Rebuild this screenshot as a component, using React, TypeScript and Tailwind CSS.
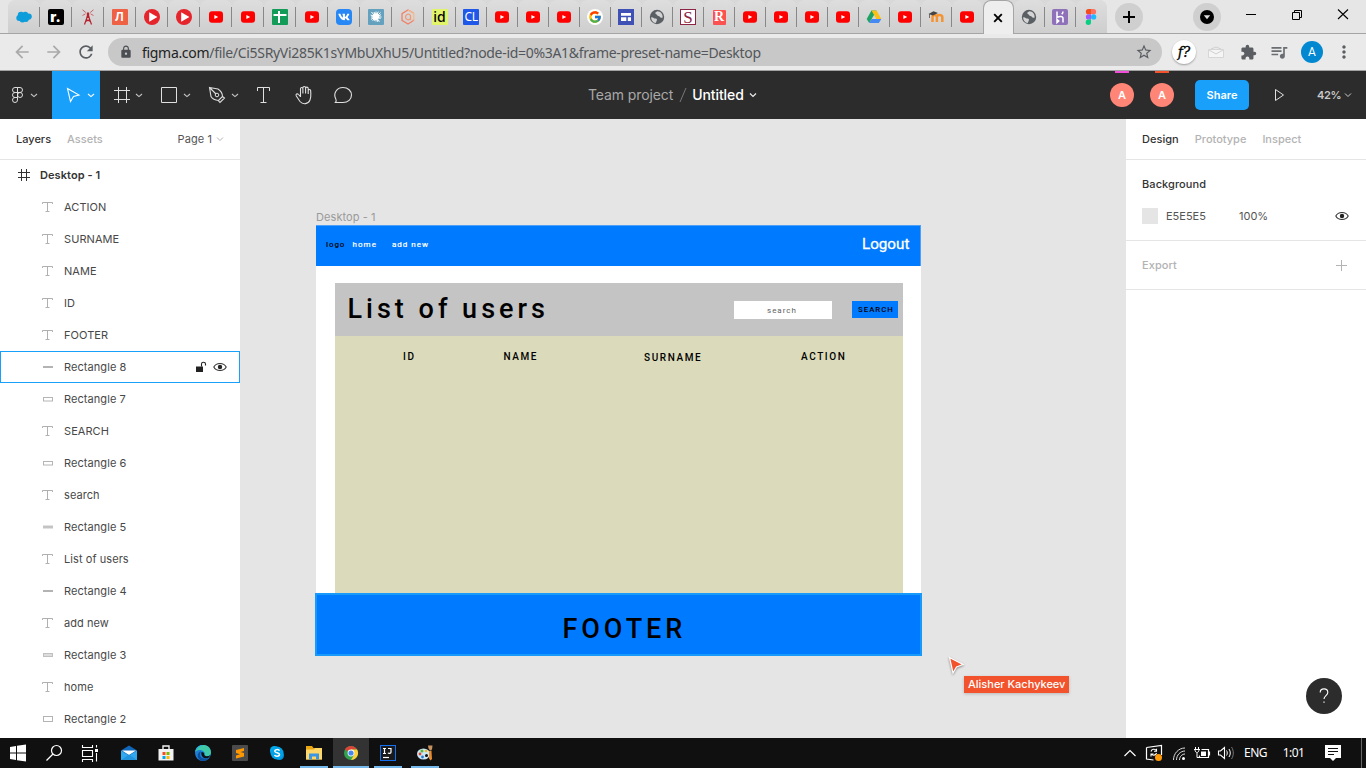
import React from "react";
import { MdArrowBack, MdArrowForward, MdRefresh, MdLock, MdStarBorder, MdExtension, MdQueueMusic, MdMoreVert } from "react-icons/md";
import { FcGoogle } from "react-icons/fc";
import { FaVk } from "react-icons/fa";

type SvgProps = { box: string; w: number; h: number; cls?: string; children: React.ReactNode };
const Svg = ({ box, w, h, cls = "", children }: SvgProps) => (
  <svg viewBox={box} width={w} height={h} fill="none" className={"block shrink-0 " + cls}>{children}</svg>
);
const Fav = ({ children }: { children: React.ReactNode }) => <Svg box="0 0 16 16" w={16} h={16}>{children}</Svg>;

const YouTube = () => (
  <Fav><rect x="1" y="2.3" width="14" height="11.4" rx="3" fill="#f00" /><path d="M6.400 5.900v4.200L10.200 8z" fill="#fff" /></Fav>
);
const PlayDot = () => (
  <Fav><circle cx="8" cy="8" r="8" fill="#e5242b" /><path d="M5.200 3.200v9.600L13.400 8z" fill="#fff" /></Fav>
);
const Globe = () => (
  <Fav>
    <circle cx="8" cy="8" r="7.200" fill="#5a5f64" />
    <path d="M2.200 8.200c2.200-.4 2.700 1.400 4.300 1.300 1.400 0 1.700.9 1.300 2l-1 2.600C4 13.600 2 11 2.200 8.200zM8.500 2.300c-1 .8-2.200.8-2.200 2 0 1 1.700.8 1.700 1.800 0 1.100 2.300.7 2.800 1.700.5 1.100 1.600 1.300 2.900.7C13.800 5 11.500 2.400 8.500 2.300z" fill="#d4d4d4" />
  </Fav>
);

const favicons: Record<string, React.ReactNode> = {
  yt: <YouTube />,
  play: <PlayDot />,
  globe: <Globe />,
  sf: (
    <Fav>
      <g fill="#0d9dda">
        <circle cx="5" cy="6" r="3.200" /><circle cx="9.300" cy="5.600" r="2.900" /><circle cx="12.700" cy="7.600" r="3.100" />
        <circle cx="3.200" cy="9" r="2.900" /><circle cx="6.500" cy="10.400" r="3" /><circle cx="10" cy="10.200" r="2.700" />
      </g>
    </Fav>
  ),
  r: <div className="flex size-4 items-center justify-center rounded-[2px] bg-black pb-[1px] font-['Inter'] text-[14px] leading-none font-black text-white">r.</div>,
  tower: (
    <Fav>
      <path d="M4.500 15.500 7.500 7M11.500 15.500 8.500 7M5.500 12.500l4.500-2M10.500 12.500l-4.500-2" stroke="#b5232f" strokeWidth="1.200" />
      <path d="M6.800 3.500h2.400V9H6.800z" fill="#b5232f" />
      <path d="M2.500.8 5.800 3.500M13.500.8 10.200 3.500M2.500 6.500 5.500 4.800M13.500 6.500 10.500 4.800" stroke="#c4525c" strokeWidth=".9" />
    </Fav>
  ),
  l: <div className="flex size-4 items-center justify-center rounded-[1px] bg-[#ef6144] font-['Liberation_Sans'] text-[12px] leading-none font-bold text-white">Л</div>,
  sheets: <Fav><rect width="16" height="16" rx="1" fill="#129c58" /><path d="M1.500 6h13M7 2v12" stroke="#fff" strokeWidth="2" /></Fav>,
  vk: <div className="flex size-4 items-center justify-center rounded-[4px] bg-[#2787f5]"><FaVk className="size-3 text-white" /></div>,
  star: (
    <Fav>
      <rect width="16" height="16" rx="1" fill="#64a1be" />
      <path d="M8 2.500v10M3 8h10.500M3.500 3l8 9.500M12.500 3.500l-8 8M6 3l4 10M10.300 2.600 6 12M2.600 6l10 3.500M3 10.300l10-4.600" stroke="#fff" strokeWidth="1" />
      <circle cx="7.800" cy="7.600" r="3.300" fill="#fff" />
    </Fav>
  ),
  hex: (
    <Fav>
      <path d="M13.500 10.500v1L8 15l-6-3.600V4.600L8 1l5.500 3" stroke="#f08068" strokeWidth="1.300" />
      <path d="M8 1l5.800 3.500v7" stroke="#f3bb90" strokeWidth="1.300" />
      <path d="M10.500 9.500c-1.300 2-5 1.500-5-1.500s3.500-3.800 5-1.500V11" stroke="#f19a7a" strokeWidth="1.300" />
    </Fav>
  ),
  id: <div className="flex size-4 items-center justify-center bg-[#e2f56a] font-['Noto_Sans'] text-[14px] leading-none font-medium text-black">id</div>,
  cl: <div className="flex size-4 items-center justify-center rounded-[1px] bg-[#1f57e8] font-['Noto_Sans'] text-[12px] leading-none tracking-[-0.5px] text-white">CL</div>,
  g: <div className="flex size-4 items-center justify-center rounded-full bg-white"><FcGoogle className="size-[14px]" /></div>,
  sites: <Fav><rect width="16" height="16" fill="#3f51b5" /><path d="M3 4h10v2.700H3zM3 8.300h5.300V12H3zM9.800 8.300H13V12H9.800z" fill="#fff" /></Fav>,
  s: <div className="flex size-4 items-center justify-center border border-[#8c2443] bg-white font-['Liberation_Serif'] text-[17px] leading-none text-[#8c2443]">S</div>,
  rr: (
    <div className="flex h-[15px] w-[13px] items-center justify-center rounded-[1px] bg-[#fb5151] font-['Liberation_Serif'] text-[14px] leading-none font-bold text-white">R</div>
  ),
  drive: (
    <Fav>
      <path d="M5.500 1.500h5L8 6 3.200 14 .7 10z" fill="#1ea362" />
      <path d="M5.500 1.500h5l4.800 8.500h-5z" fill="#fbc116" />
      <path d="M3.200 14h9.600l2.500-4H5.600z" fill="#4688f4" />
    </Fav>
  ),
  moodle: (
    <Fav>
      <path d="M3 13.500V8.500c0-2.600 4.400-2.600 4.400 0v5m0-5c0-2.600 5.400-2.600 5.400 0v5" stroke="#f59331" strokeWidth="2.500" transform="translate(1.500 -.5)" />
      <path d="m.5 5 5-2.800L10 4 5 6.500z" fill="#444" /><path d="M1.500 5v4" stroke="#444" strokeWidth=".7" />
    </Fav>
  ),
  heroku: (
    <div className="size-4 rounded-[2px] bg-[#8f71ba]">
      <Fav><path d="M5 2.500v6c2-1 6-1.700 6 .8v4.200M5 10.500v3l1.700-1.500zM11 2.500c0 1.200-.5 2-1.200 2.800" stroke="#fff" strokeWidth="1.500" /></Fav>
    </div>
  ),
  figma: (
    <Fav>
      <path d="M5.500 0H8v5.300H5.500a2.650 2.650 0 0 1 0-5.300z" fill="#f24e1e" />
      <path d="M8 0h2.500a2.650 2.650 0 0 1 0 5.300H8z" fill="#ff7262" />
      <path d="M5.500 5.300H8v5.300H5.500a2.650 2.650 0 0 1 0-5.300z" fill="#a259ff" />
      <circle cx="10.600" cy="7.950" r="2.650" fill="#1abcfe" />
      <path d="M5.500 10.600H8v2.600a2.650 2.650 0 1 1-2.500-2.600z" fill="#0acf83" />
    </Fav>
  ),
};

const wideTabs = ["sf", "r", "tower", "l", "play", "play", "yt", "yt", "sheets", "yt", "vk", "star", "hex", "id"];
const slimTabs = ["cl", "yt", "yt", "yt", "g", "sites", "globe", "s", "rr", "yt", "yt", "yt", "yt", "drive", "yt", "moodle", "yt"];
const lastTabs = ["globe", "heroku", "figma"];

const Tab = ({ id, width, sep = true }: { id: string; width: string; sep?: boolean }) => (
  <div className={"flex h-[33px] shrink-0 items-center rounded-t-[8px] bg-linear-to-b from-[#dedede] to-[#cecece] pt-px " + width}>
    <div className="flex flex-1 items-center justify-center">{favicons[id]}</div>
    <div className={"h-5 w-px " + (sep ? "bg-[#888]" : "bg-transparent")} />
  </div>
);

const TabStrip = () => (
  <div className="flex h-[34px] shrink-0 border-b border-[#a5a5a5] bg-[#e6e6e6] pl-2">
    <div className="flex rounded-t-[8px] bg-[#d8d8d8]">
      {wideTabs.map((t, i) => <Tab key={i} id={t} width="w-8" />)}
      {slimTabs.map((t, i) => <Tab key={i} id={t} width="w-[31px]" sep={i < slimTabs.length - 1} />)}
      <div className="z-10 flex h-[34px] w-[31px] items-center justify-center rounded-t-[8px] border border-b-0 border-[#a5a5a5] bg-[#eee] pr-px">
        <Svg box="0 0 10 10" w={10} h={10}><path d="m1.200 1.200 7.600 7.600m0-7.600L1.200 8.800" stroke="#000" strokeWidth="1.900" /></Svg>
      </div>
      {lastTabs.map((t, i) => <Tab key={i} id={t} width="w-[31px]" sep={i < 2} />)}
    </div>
    <div className="mt-[3px] ml-2 flex size-7 items-center justify-center rounded-full bg-[#cfcfcf]">
      <Svg box="0 0 12 12" w={12} h={12}><path d="M6 0v12M0 6h12" stroke="#000" strokeWidth="2" /></Svg>
    </div>
    <div className="mt-[3px] ml-[50px] flex size-7 items-center justify-center rounded-full bg-[#cfcfcf]">
      <Svg box="0 0 14 14" w={14} h={14}><circle cx="7" cy="7" r="7" fill="#000" /><path d="M3.800 5.300h6.400L7 9.200z" fill="#ddd" /></Svg>
    </div>
    <Svg box="1221 0 145 30" w={145} h={30}>
      <path d="M1246 14.500h10" stroke="#000" />
      <path d="M1292.500 12.500h7v7h-7zM1294.500 12.500v-2h7v7h-2" stroke="#000" />
      <path d="m1338 9.500 10 9.500m0-9.500-10 9.500" stroke="#000" strokeWidth="1.100" />
    </Svg>
  </div>
);

const Toolbar = () => (
  <div className="flex h-[37px] shrink-0 items-center border-b border-[#a2a2a2] bg-[#eaeaea] pl-3">
    <MdArrowBack className="size-5 text-[#a9a9a9]" />
    <MdArrowForward className="ml-3 size-5 text-[#a9a9a9]" />
    <MdRefresh className="ml-3 size-5 text-[#5a5e62]" />
    <div className="ml-3 flex h-7 w-[1054px] items-center rounded-full bg-[#c8c8c8] pr-[9px] pl-[11px]">
      <MdLock className="size-[14px] text-[#4b4e52]" />
      <div className="ml-[9px] flex-1 font-['Noto_Sans'] text-[14px] tracking-[-0.31px] whitespace-nowrap text-[#53565a]">
        <span className="text-[#222]">figma.com</span>/file/Ci5SRyVi285K1sYMbUXhU5/Untitled?node-id=0%3A1&amp;frame-preset-name=Desktop
      </div>
      <MdStarBorder className="size-[18px] text-[#5a5e62]" />
    </div>
    <div className="ml-[10px] flex size-6 items-center justify-center rounded-full bg-white font-['DejaVu_Serif'] text-[14px] leading-none text-black italic shadow-[0_1px_2px_#0005] [-webkit-text-stroke:0.3px_black]">f?</div>
    <Svg box="0 0 16 16" w={16} h={16} cls="ml-3">
      <path d="M.5 5.500h15v8h-15z" fill="#f5f5f5" stroke="#d6d6d6" /><path d="m1 6 7 4 7-4M3 5l5-2 5 2" stroke="#d0d0d0" />
    </Svg>
    <MdExtension className="ml-[16px] size-[17px] text-[#5a5e62]" />
    <MdQueueMusic className="ml-[12px] size-5 text-[#6a6e72]" />
    <div className="ml-[12px] flex size-[22px] items-center justify-center rounded-full bg-[#0288d1] font-['Roboto'] text-[12px] leading-none text-white">A</div>
    <MdMoreVert className="ml-[11px] size-5 text-[#5a5e62]" />
  </div>
);

const Chev = ({ x, y = 94.500, color = "#c4c4c4" }: { x: number; y?: number; color?: string }) => (
  <path d={`M${x - 3} ${y - 0.5}l3 2.600 3-2.600`} stroke={color} strokeWidth="1.100" />
);

const FigmaBar = () => (
  <div className="flex h-12 shrink-0 items-center bg-[#2c2c2c] font-['Inter'] text-white">
    <Svg box="0 71 52 48" w={52} h={48}>
      <path d="M17.500 87.500h-2.500a2.500 2.500 0 0 0 0 5h2.500zM17.500 87.500h2.500a2.500 2.500 0 0 1 0 5h-2.500zM17.500 92.500h-2.500a2.500 2.500 0 0 0 0 5h2.500zM17.500 97.500h-2.500a2.500 2.500 0 1 0 2.500 2.500z" stroke="#ddd" />
      <circle cx="20" cy="95" r="2.500" stroke="#ddd" />
      <Chev x={34} />
    </Svg>
    <Svg box="52 71 48 48" w={48} h={48} cls="bg-[#18a0fb]">
      <path d="m67.500 88.500 11.500 6.500-5.500 1.500-3 5z" stroke="#fff" strokeWidth="1.100" /><Chev x={91} color="#fff" />
    </Svg>
    <Svg box="100 71 48 48" w={48} h={48}>
      <path d="M118.500 87v16M126.500 87v16M114 90.500h16M114 99.500h16" stroke="#e0e0e0" /><Chev x={139} />
    </Svg>
    <Svg box="148 71 48 48" w={48} h={48}>
      <path d="M161.500 87.500h15v15h-15z" stroke="#e0e0e0" /><Chev x={187} />
    </Svg>
    <Svg box="196 71 48 48" w={48} h={48}>
      <path d="M209.500 87.500l8.500 1.500c3 2 4.500 4.500 4.500 7.500l-4 4c-3-.3-6-1.500-7.500-4zM209.500 87.500l6.500 6.500M218.500 100.800l1.500 1.700 4.500-4.500-2-1.500" stroke="#ddd" strokeWidth="1.100" />
      <circle cx="217" cy="95" r="1.800" stroke="#ddd" /><Chev x={235} />
    </Svg>
    <Svg box="244 71 40 48" w={40} h={48}>
      <path d="M257.500 91v-3.500h12V91M263.500 87.500v15M260.500 102.500h6" stroke="#e0e0e0" />
    </Svg>
    <Svg box="284 71 40 48" w={40} h={48}>
      <path d="M299 96.500V88.200c0-1.600 2.400-1.600 2.400 0V93m0-5.500c0-2.100 2.700-2.100 2.700 0V93m0-5c0-1.900 2.600-1.900 2.600 0v5.500m0-3.200c0-1.700 2.500-1.700 2.500 0 0 3.500.8 6.200-.8 9.500-1.700 4-7.100 4.500-9.900 1.200l-3.700-5.500c-1-1.700 1-2.900 2.200-1.500l2 2.200" transform="translate(1.500 .5)" stroke="#e0e0e0" strokeWidth="1.100" />
    </Svg>
    <Svg box="324 71 40 48" w={40} h={48}>
      <path d="M335.500 102.500c1-1 1-2 .3-3.600-2.800-5.200.7-11.400 7.200-11.400 5 0 8.500 3.500 8.500 7.600s-3.500 7.400-8.500 7.400z" stroke="#e0e0e0" strokeWidth="1.100" />
    </Svg>
    <div className="ml-[224px] flex w-[180px] items-center text-[14px] leading-[18px]">
      <span className="tracking-[-0.1px] text-[#a8a8a8]">Team project</span>
      <Svg box="0 0 8 18" w={8} h={18} cls="ml-[6px]"><path d="M1 16 7 2" stroke="#777" /></Svg>
      <span className="ml-[5px] font-medium tracking-[-0.1px]">Untitled</span>
      <Svg box="0 0 8 6" w={8} h={6} cls="ml-[5px]"><path d="m1 1.500 3 3 3-3" stroke="#eee" strokeWidth="1.200" /></Svg>
    </div>
    <div className="ml-auto flex items-center">
      {["bg-[#f24dd8]", "bg-[#f2532d]"].map((c) => (
        <div key={c} className="mr-4 flex h-12 w-6 flex-col items-center">
          <div className={"h-[2px] w-[14px] " + c} />
          <div className="mt-[10px] flex size-6 items-center justify-center rounded-full bg-[#ff8577] text-[11px] font-semibold">A</div>
        </div>
      ))}
    </div>
    <div className="ml-[5px] flex h-[30px] w-[54px] items-center justify-center rounded-[5px] bg-[#18a0fb] text-[11px] font-semibold">Share</div>
    <div className="flex w-[68px] pl-[25px]">
      <Svg box="0 0 12 14" w={12} h={14}><path d="M1.500 1.500v11L9.500 7z" stroke="#e0e0e0" /></Svg>
    </div>
    <div className="w-[27px] text-[11px] font-semibold tracking-[-0.400px] text-[#c8c8c8]">42%</div>
    <Svg box="0 0 8 6" w={8} h={6} cls="mr-[14px]"><path d="m1 1.500 3 3 3-3" stroke="#ccc" /></Svg>
  </div>
);

const Eye = ({ cls = "" }: { cls?: string }) => (
  <Svg box="0 0 14 10" w={14} h={10} cls={cls}>
    <path d="M.8 5C3.300.300 10.700.300 13.200 5 10.700 9.700 3.300 9.700.8 5z" stroke="#333" strokeWidth="1.100" /><circle cx="7" cy="5" r="2.200" fill="#222" />
  </Svg>
);

type Layer = { name: string; kind: "text" | "line" | "bar" | "fill" | "rect" | "tall"; on?: boolean };
const layers: Layer[] = [
  { name: "ACTION", kind: "text" }, { name: "SURNAME", kind: "text" }, { name: "NAME", kind: "text" },
  { name: "ID", kind: "text" }, { name: "FOOTER", kind: "text" }, { name: "Rectangle 8", kind: "line", on: true },
  { name: "Rectangle 7", kind: "rect" }, { name: "SEARCH", kind: "text" }, { name: "Rectangle 6", kind: "rect" },
  { name: "search", kind: "text" }, { name: "Rectangle 5", kind: "bar" }, { name: "List of users", kind: "text" },
  { name: "Rectangle 4", kind: "line" }, { name: "add new", kind: "text" }, { name: "Rectangle 3", kind: "fill" },
  { name: "home", kind: "text" }, { name: "Rectangle 2", kind: "tall" },
];

const LayerIcon = ({ kind }: { kind: Layer["kind"] }) => (
  <Svg box="0 0 12 12" w={12} h={12}>
    {kind === "text" && <path d="M.5 3V1.500h10V3M5.500 1.500v9M3.500 10.500h4" stroke="#b0b0b0" />}
    {kind === "line" && <path d="M1 6h10" stroke="#b3b3b3" strokeWidth="2" />}
    {kind === "bar" && <path d="M1 6h10" stroke="#c4c4c4" strokeWidth="3" />}
    {kind === "fill" && <rect x="1.500" y="4.500" width="9" height="3" fill="#ddd" stroke="#c0c0c0" />}
    {kind === "rect" && <rect x="1.500" y="4.500" width="9" height="3.500" stroke="#b5b5b5" />}
    {kind === "tall" && <rect x="1.500" y="3.500" width="9" height="5" stroke="#b3b3b3" />}
  </Svg>
);

const LeftPanel = () => (
  <div className="flex w-60 shrink-0 flex-col overflow-hidden bg-white font-['Inter'] text-[11px] text-[#333]">
    <div className="-mb-px flex h-[41px] shrink-0 items-center border-b border-[#e5e5e5] px-4">
      <span className="font-medium">Layers</span>
      <span className="ml-4 font-medium text-[#b3b3b3]">Assets</span>
      <span className="ml-auto tracking-[0.08px] text-[#555]">Page 1</span>
      <Svg box="0 0 8 6" w={8} h={6} cls="ml-1"><path d="m1 1.500 3 3 3-3" stroke="#b3b3b3" /></Svg>
    </div>
    <div className="flex h-8 shrink-0 items-center pl-[18px]">
      <Svg box="0 0 12 12" w={12} h={12}><path d="M3.500 0v12M8.500 0v12M0 3.500h12M0 8.500h12" stroke="#333" /></Svg>
      <span className="ml-[10px] font-semibold tracking-[0.08px]">Desktop - 1</span>
    </div>
    {layers.map((l) => (
      <div key={l.name} className={"flex h-8 shrink-0 items-center border pr-[12px] pl-[41px] " + (l.on ? "border-[#18a0fb]" : "border-transparent")}>
        <LayerIcon kind={l.kind} />
        <span className="ml-[10px] tracking-[0.07px] text-[#484848]">{l.name}</span>
        {l.on && (
          <>
            <Svg box="0 0 12 12" w={12} h={12} cls="ml-auto"><path d="M1 5.500h7V11H1z" fill="#222" /><path d="M6.500 5.500V3c0-2.300 4-2.300 4 0v1.500" stroke="#222" strokeWidth="1.100" /></Svg>
            <Eye cls="ml-[6px]" />
          </>
        )}
      </div>
    ))}
  </div>
);

const Canvas = () => (
  <div className="relative flex-1 overflow-hidden bg-[#e5e5e5] font-['Roboto'] leading-none font-medium whitespace-nowrap text-black">
    <div className="absolute top-[92px] left-[76px] font-['Inter'] text-[11px] leading-[13px] font-normal tracking-[0.08px] text-[#9a9a9a]">Desktop - 1</div>
    <div className="absolute top-[106px] left-[76px] h-[430px] w-[604.500px] bg-white" />
    <div className="absolute top-[106px] left-[76px] h-[41px] w-[605px] border-t border-r border-t-[#4da0f5] border-r-[#4da0f5] bg-[#007aff]" />
    <div className="absolute top-[122px] left-[86px] text-[8px] tracking-[0.900px]">logo</div>
    <div className="absolute top-[122px] left-[112.500px] text-[8px] font-normal tracking-[1.050px] text-white [-webkit-text-stroke:0.2px_white]">home</div>
    <div className="absolute top-[122px] left-[152px] text-[8px] font-normal tracking-[1px] text-white [-webkit-text-stroke:0.2px_white]">add new</div>
    <div className="absolute top-[118px] left-[622px] text-[15.200px] font-normal text-white [-webkit-text-stroke:0.3px_white]">Logout</div>
    <div className="absolute top-[164px] left-[95px] h-[54px] w-[568px] bg-[#c4c4c4]" />
    <div className="absolute top-[217px] left-[95px] h-[258px] w-[568px] bg-[#dbdbbb]" />
    <div className="absolute top-[177px] left-[107.500px] text-[27px] tracking-[4px]">List of users</div>
    <div className="absolute top-[181.500px] left-[494px] h-[18px] w-[98px] bg-white" />
    <div className="absolute top-[188px] left-[527px] text-[8px] font-normal tracking-[1px] text-[#606060]">search</div>
    <div className="absolute top-[182px] left-[612px] h-[17px] w-[46px] bg-[#007aff]" />
    <div className="absolute top-[187px] left-[618px] text-[7.800px] tracking-[1px]">SEARCH</div>
    <div className="absolute top-[233px] left-[163px] text-[10px] tracking-[1.550px]">ID</div>
    <div className="absolute top-[233px] left-[263.500px] text-[10px] tracking-[1.550px]">NAME</div>
    <div className="absolute top-[234px] left-[404px] text-[10px] tracking-[1.600px]">SURNAME</div>
    <div className="absolute top-[233px] left-[561px] text-[10px] tracking-[1.600px]">ACTION</div>
    <div className="absolute top-[474px] left-[75px] h-[63px] w-[607px] border-2 border-[#189afb] bg-[#007aff]" />
    <div className="absolute top-[497px] left-[322.500px] text-[27px] tracking-[3.900px]">FOOTER</div>
    <svg className="absolute top-[535px] left-[707px] drop-shadow-[0_1px_1px_#0006]" width="18" height="22" viewBox="0 0 18 22">
      <path d="M2.500 3.500 16 10.500l-6.500 2.500-3.500 6z" fill="#f2532d" stroke="#fff" strokeWidth="1.200" />
    </svg>
    <div className="absolute top-[557px] left-[724px] h-[17px] w-[105px] bg-[#f2532d] pl-1 font-['Inter'] text-[11px] leading-[17px] text-white shadow-[0_1px_3px_#0003]">Alisher Kachykeev</div>
  </div>
);

const RightPanel = () => (
  <div className="flex w-60 shrink-0 flex-col bg-white font-['Inter'] text-[11px] text-[#333]">
    <div className="flex h-[41px] items-center border-b border-[#e5e5e5] pl-4 font-medium text-[#b3b3b3]">
      <span className="tracking-[0.04px] text-[#333]">Design</span><span className="ml-4">Prototype</span><span className="ml-4">Inspect</span>
    </div>
    <div className="flex h-[81px] flex-col border-b border-[#e5e5e5] pt-2 pr-[17px] pl-4">
      <div className="flex h-8 items-center font-medium tracking-[0.08px]">Background</div>
      <div className="flex h-8 items-center text-[#555]">
        <div className="size-4 bg-[#e5e5e5]" />
        <span className="ml-2 w-[73px]">E5E5E5</span>
        <span>100%</span>
        <Eye cls="ml-auto" />
      </div>
    </div>
    <div className="flex h-[49px] items-center border-b border-[#e5e5e5] pr-[19px] pl-4 font-medium tracking-[0.08px] text-[#b3b3b3]">
      Export
      <Svg box="0 0 11 11" w={11} h={11} cls="ml-auto"><path d="M5.500 0v11M0 5.500h11" stroke="#b3b3b3" /></Svg>
    </div>
    <div className="mt-auto mr-6 mb-6 flex size-9 items-center justify-center self-end rounded-full bg-[#2c2c2c]">
      <Svg box="0 0 12 16" w={12} h={16}><path d="M2.200 4.500C2.200-.3 9.800-.3 9.800 4.500c0 3-3.800 3.200-3.800 6.500" stroke="#fff" strokeWidth="1.100" /><path d="M5.400 13.400h1.200v1.300H5.400z" fill="#fff" /></Svg>
    </div>
  </div>
);

const apps: { mark: "none" | "open" | "active"; icon: React.ReactNode }[] = [
  { mark: "none", icon: <><path d="M0 5.500 8 .5l8 5V15H0z" fill="#1066b8" /><path d="M1 5.500h14L8 10z" fill="#fff" /><path d="M0 5.500 8 10.500l8-5V15H0z" fill="#32a9ee" /><path d="M0 15 8 9.500 16 15z" fill="#2294dd" /></> },
  { mark: "none", icon: <><path d="M.5 4h15v11.500h-15z" fill="#f2f2f2" /><path d="M5 4V1h6v3" stroke="#f2f2f2" strokeWidth="1.400" /><path d="M4.500 7h3v3h-3z" fill="#f25022" /><path d="M8.500 7h3v3h-3z" fill="#7fba00" /><path d="M4.500 11h3v3h-3z" fill="#00a4ef" /><path d="M8.500 11h3v3h-3z" fill="#ffb900" /></> },
  { mark: "none", icon: <><circle cx="8" cy="8" r="8" fill="#1b7fd4" /><path d="M.3 7C1-2.300 16-2.300 16 7.500c0 4-5 4.500-6.300 2.500C11 6 4 3 .3 7z" fill="#3fc9a8" /><path d="M.3 7C1 2 5-.5 8.500 0 4 1 2 4 .3 7z" fill="#2aa6e8" /><path d="M6 6.500c-3 5 1.500 9.500 8 6-2 3-5.500 4-8 3C1 13 2 7.500 6 6.500z" fill="#0b4f9e" /><path d="M6.500 7c2 0 3 1.200 2.700 3 1 1.700 4.500 1.400 6 .3-.3 1-.8 1.800-1.300 2.300C9 15 5.500 11 6.500 7z" fill="#101010" /></> },
  { mark: "none", icon: <><rect width="16" height="16" rx="1" fill="#4b4b4b" /><path d="M12 3v3L8.500 7 12 8v3.500L4 13.500v-3L8 9.200 4 8V5z" fill="#ff9800" /></> },
  { mark: "none", icon: <><rect x="1" y="1" width="9" height="9" rx="4.500" fill="#00aff0" /><rect x="6" y="6" width="9" height="9" rx="4.500" fill="#0090da" /><circle cx="8" cy="8" r="6.500" fill="#00a2e8" /><path d="M10.500 5.800C9.800 4 5.600 4.300 5.800 6.300c.2 1.800 4.700 1.200 4.700 3.300 0 2-4.300 2.200-5 .3" stroke="#fff" strokeWidth="1.500" /></> },
  { mark: "open", icon: <><path d="M0 1h6l1.500 2H16v11.500H0z" fill="#e8a713" /><path d="M0 4.500h8L9 3h7v11.500H0z" fill="#ffd768" /><path d="M3 14.500v-6h10v6h-3V11.500H6v3z" fill="#3b97e3" /></> },
  { mark: "active", icon: <><circle cx="8" cy="8" r="7" fill="#34a150" /><path d="M8 8 1.900 4.500A7 7 0 0 1 14 4.500H8z" fill="#dc4437" /><path d="M8 8V4.500h6.100A7 7 0 0 1 8 15l3-5z" fill="#fdd03c" /><circle cx="8" cy="8" r="3.400" fill="#fff" /><circle cx="8" cy="8" r="2.600" fill="#4a85ee" /></> },
  { mark: "open", icon: <><rect x=".5" y=".5" width="15" height="15" fill="#1a1a1a" stroke="#1570ef" /><path d="M3 3.500h3M4.500 3.500v5M3 8.500h3M8 3.500h3v3.800c0 1.400-2.500 1.500-3 .5" stroke="#fff" strokeWidth="1.200" /><path d="M3 12.500h6" stroke="#fff" strokeWidth="1.200" /></> },
  { mark: "open", icon: <><ellipse cx="6.500" cy="9" rx="6.500" ry="5.500" fill="#c9e7f5" /><circle cx="3" cy="9" r="1.400" fill="#e2432f" /><circle cx="5" cy="6" r="1.500" fill="#5cb531" /><circle cx="9" cy="6" r="1.300" fill="#f5b721" /><circle cx="9.500" cy="10.500" r="1.500" fill="#101010" /><circle cx="5.500" cy="12" r="1.400" fill="#2a78d0" /><path d="m12 6 2.500-.5.5 8.500-1.500 1.500-1.500-2z" fill="#e98a2c" /><path d="M11 .5h4.500L15 4.500l-2 1-1.500-2z" fill="#c79160" /></> },
];

const Taskbar = () => (
  <div className="flex h-[30px] shrink-0 items-center bg-[#101010] font-['Noto_Sans'] text-[12px] text-white">
    <Svg box="0 738 36 30" w={36} h={30}><path d="m10 747 6-1v6.500h-6zM17 745.800l9-1.300v8h-9zM10 753.500h6v6.500l-6-1zM17 753.500h9v8l-9-1.300z" fill="#fff" /></Svg>
    <Svg box="36 738 36 30" w={36} h={30}><circle cx="56.500" cy="750.500" r="5" stroke="#fff" strokeWidth="1.200" /><path d="m53 754-6.500 6.500" stroke="#fff" strokeWidth="1.300" /></Svg>
    <Svg box="72 738 36 30" w={36} h={30}><path d="M82.500 745v2.500h10V745M82.500 750.500h10v6h-10zM82.500 762v-2.500h10v2.500M96.500 745v2.500M96.500 753v8.500" stroke="#fff" strokeWidth="1.100" /><path d="M95 749h3v3h-3z" fill="#fff" /></Svg>
    <div className="ml-[3px] flex gap-px">
      {apps.map((a, i) => (
        <div key={i} className={"flex h-[30px] w-9 flex-col items-center " + (a.mark === "active" ? "bg-[#333]" : "")}>
          <Svg box="0 0 16 16" w={16} h={16} cls="mt-[7px]">{a.icon}</Svg>
          {a.mark !== "none" && <div className={"mt-auto h-[2px] bg-[#76b9ed] " + (a.mark === "active" ? "w-9" : "w-7")} />}
        </div>
      ))}
    </div>
    <Svg box="1118 738 120 30" w={120} h={30} cls="ml-auto">
      <path d="m1124.500 756 5.500-5.500 5.500 5.500" stroke="#fff" strokeWidth="1.200" />
      <path d="M1146.500 747.500 1161.500 745.500V755M1146.500 747.500v11.500l7 1" stroke="#fff" strokeWidth="1.200" />
      <path d="M1151 751.500a3 3 0 0 1 5.500-.8M1156.500 748.700v2.500h-2.500M1156.500 753a3 3 0 0 1-5.300 1M1151 756.500v-2.500h2.500" stroke="#fff" strokeWidth="1.100" />
      <circle cx="1158.500" cy="757.500" r="3.500" fill="#ff9a0a" />
      <path d="M1173.500 760c0-6.500 5-12 11.500-12M1176.500 760c0-5 4-9 8.500-9M1179.500 760c0-3.300 2.500-6 5.500-6" stroke="#ddd" />
      <circle cx="1183.500" cy="758.500" r="1.500" fill="#fff" />
      <path d="M1201.500 749.500h7v8h-9v-2M1209.500 751.500v4" stroke="#fff" strokeWidth="1.200" /><path d="M1201 751.500h5v4.500h-5z" fill="#fff" />
      <path d="M1195.500 747v2M1198.500 747v2M1194 749.500h6M1195 749.500c0 4 4 4 4 0M1197 753v4.500h3" stroke="#fff" />
      <path d="M1218.500 751h2l4-3.500v11l-4-3.500h-2z" stroke="#fff" strokeWidth="1.100" /><path d="M1226.500 750.500c1 1.500 1 3.500 0 5M1229 749c1.700 2.500 1.700 5.500 0 8" stroke="#fff" /><path d="M1231.500 747c2.400 3.500 2.400 8.500 0 12" stroke="#777" />
    </Svg>
    <div className="flex w-[35px] justify-center tracking-[-0.5px]">ENG</div>
    <div className="flex w-[41px] justify-center tracking-[-0.6px]">1:01</div>
    <Svg box="1314 738 52 30" w={52} h={30}>
      <path d="M1325 745h16v13h-5l-3 3-3-3h-5z" fill="#fff" /><path d="M1328 748.500h10M1328 751.500h10M1328 754.500h6" stroke="#101010" /><path d="M1361.500 738v30" stroke="#666" />
    </Svg>
  </div>
);

export default function App() {
  return (
    <div className="flex h-[768px] w-[1366px] flex-col overflow-hidden">
      <TabStrip />
      <Toolbar />
      <FigmaBar />
      <div className="flex min-h-0 flex-1">
        <LeftPanel />
        <Canvas />
        <RightPanel />
      </div>
      <Taskbar />
    </div>
  );
}
